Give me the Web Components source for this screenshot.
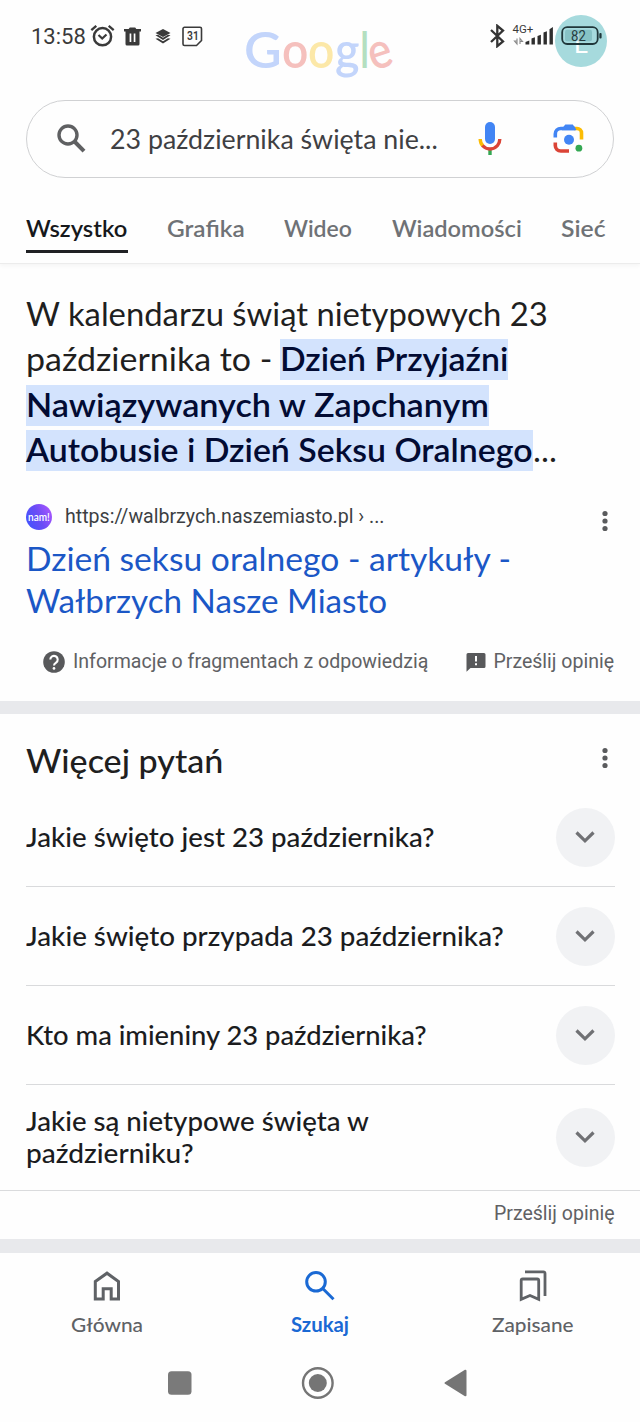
<!DOCTYPE html>
<html lang="pl">
<head>
<meta charset="utf-8">
<title>23 października święta nietypowe</title>
<style>
html,body{margin:0;background:#fefefe;overflow:hidden}
body{font-family:Lato,"Noto Sans",sans-serif;width:640px;height:1422px;color:#1f1f1f}
</style>
</head>
<body>
<search-app></search-app>

<script>
const make = (name, html, after) => customElements.define(name, class extends HTMLElement {
  connectedCallback() {
    if (this.shadowRoot) return;
    const t = document.createElement('template');
    t.innerHTML = html;
    this.attachShadow({mode: 'open'}).append(t.content.cloneNode(true));
    if (after) after.call(this, this.shadowRoot);
  }
});

make('search-app', `
<style>
:host{display:flex;flex-direction:column;height:1422px;position:relative}
.band{background:#e8e9ec;flex:none}
</style>
<status-bar></status-bar>
<page-header></page-header>
<featured-snippet></featured-snippet>
<div class="band" style="height:12.5px"></div>
<people-ask></people-ask>
<div class="band" style="height:14.7px"></div>
<bottom-nav></bottom-nav>
<system-nav></system-nav>`);

make('status-bar', `
<style>
:host{position:absolute;z-index:2;inset:0 0 auto 0;height:72px;display:flex;align-items:center;box-sizing:border-box;padding:0 39.500px 0 31px;font-family:Roboto,sans-serif;color:#3a3a3a}
svg{display:block;flex:none}
.net{position:relative;width:41px;height:24px;margin-left:8px}
.net fit-text{position:absolute;left:0;top:-1px;font-size:11.500px;line-height:13px}
.bat{width:40px;height:22px;margin-left:7px;display:grid;place-items:center;position:relative}
.bat svg{position:absolute;inset:0 auto auto 0}
.bat fit-text{font-size:14px;line-height:20px;margin-right:4px;color:#263c3f}
</style>
<fit-text w="55" style="font-size:22px;line-height:30px;margin-top:2px">13:58</fit-text>
<svg style="margin-left:4px" width="25" height="24" viewBox="0 0 25 24" fill="none" stroke="#3a3a3a" stroke-width="2.5"><circle cx="12.5" cy="12.7" r="8.6"/><path d="M8.5 11l3.7 3.5 4.3-4" stroke-width="2.2"/><path d="M1.3 6.2l5-4.3M18.7 1.900l5 4.300" stroke-width="2.300"/></svg>
<svg style="margin-left:9px" width="17" height="19" viewBox="0 0 17 19"><path fill="#3a3a3a" fill-rule="evenodd" d="M0 2h4.700L5.800.500h5.400L12.300 2H17v2.500h-1.500V17a1.500 1.500 0 0 1-1.500 1.500H3A1.500 1.500 0 0 1 1.500 17V4.500H0zM5.600 6.500v8.500h1.700V6.500zm4.100 0v8.500h1.700V6.500z"/></svg>
<svg style="margin-left:14px" width="16" height="15" viewBox="0 0 16 15" fill="#3a3a3a"><path d="M8 0l7.500 4L8 8 .5 4z"/><path d="M.5 6.300L3 5.700 8 8.700l5-3 2.500.6L8 10.900z"/><path d="M.5 9.800L3 9.200l5 3 5-3 2.500.6L8 14.400z"/></svg>
<span style="position:relative;margin-left:11px;width:21px;height:21px;display:grid;place-items:center">
<svg style="position:absolute" width="21" height="21" viewBox="0 0 21 21" fill="none" stroke="#3a3a3a" stroke-width="1.600"><path d="M2.500 1.300h15.500a1.500 1.500 0 0 1 1.500 1.500v11.700l-5 5H2.500A1.500 1.500 0 0 1 1 18V2.800a1.500 1.500 0 0 1 1.500-1.500zM19.500 14.500l-5 5"/></svg>
<fit-text w="12" style="font-size:12px;line-height:14px;font-weight:600;margin-bottom:1px">31</fit-text></span>
<span style="flex:1"></span>
<svg width="15" height="24" viewBox="0 0 15 24" fill="none" stroke="#333" stroke-width="2.300"><path d="M1 6l12 11.500-5.700 4.700V1.800L13 6.500 1 18"/></svg>
<span class="net">
<fit-text w="21">4G+</fit-text>
<svg width="41" height="24" viewBox="0 0 41 24"><path fill="#2e2e2e" d="M12.500 20.500V18l3.800-1.500v4zM18.500 20.500v-6l3.400-1.200v7.200zM24.500 20.500v-8.500l3.400-1.200v9.700zM30.500 20.500V8.500l3.400-1.300v13.300zM36.500 20.500V5.200L39.900 3v17.500z"/><path stroke="#888" fill="none" stroke-width="1.100" d="M4 14.500v5.500L1.500 17H4M7 20v-5.500l2.500 3H7"/></svg>
</span>
<span class="bat"><svg width="41" height="22" viewBox="0 0 41 22"><rect x="1.200" y="2.200" width="35.500" height="16.800" rx="5" fill="none" stroke="#20373a" stroke-width="1.800"/><rect x="4" y="4.800" width="27" height="11.500" rx="2" fill="#5b9da2" opacity=".4"/><rect x="38.300" y="8" width="2.300" height="5.500" rx="1" fill="#20373a"/></svg><fit-text w="15">82</fit-text></span>`);

make('page-header', `
<style>
:host{display:block;height:264px;flex:none;border-bottom:1px solid #ececec;box-sizing:border-box;box-shadow:0 2px 4px #0000000a}
.top{height:99.500px;position:relative;display:flex;justify-content:center}
.avatar{position:absolute;left:555px;top:15px;width:52px;height:52px;border-radius:50%;background:#a6dadd;color:#fff;display:grid;place-items:center;font:26px/52px Roboto,sans-serif}
.avatar span{margin-top:3px}
.logo{margin:9px 5px 0 0;font-size:50.500px;line-height:80px;font-weight:600;height:80px;display:flex;width:147.500px}
.b{color:#c3d5fb}.r{color:#f5c0bd}.y{color:#fce8a8}.g{color:#b4dfc0}
.e{transform:rotate(-18deg);transform-origin:50% 59%}
</style>
<div class="top"><div class="logo"><fit-text w="38" class="b">G</fit-text><fit-text w="26.500" class="r">o</fit-text><fit-text w="26.500" class="y">o</fit-text><fit-text w="25" class="b">g</fit-text><fit-text w="9" class="g">l</fit-text><fit-text w="23.500" class="r e">e</fit-text></div><div class="avatar"><span>L</span></div></div>
<search-box></search-box>
<result-tabs></result-tabs>`);

make('search-box', `
<style>
:host{display:flex;align-items:center;margin:0 26px;width:588px;height:78px;border:1.500px solid #d0d1d3;border-radius:39px;box-sizing:border-box;color:#3f4043}
svg{display:block;flex:none}
</style>
<svg style="margin-left:29px" width="32" height="32" viewBox="0 0 32 32" fill="none" stroke="#5f6062" stroke-width="3.400"><circle cx="12" cy="12" r="9"/><path d="M18.500 18.500l9.500 9.700" stroke-width="4"/></svg>
<fit-text w="328" style="margin-left:22px;font-size:27px;line-height:40px">23 października święta nie...</fit-text>
<svg style="margin-left:40px" width="24" height="34" viewBox="0 0 24 34" fill="none" stroke-width="3.400"><path d="M12 27v6" stroke="#34a853"/><path d="M2.200 17c0 3 1 5.200 2.800 7" stroke="#fbbc04"/><path d="M4.500 23.500c4 4.700 11 4.700 15 0 1.700-2 2.300-4 2.300-6.500" stroke="#db4437"/><rect x="7" y="0" width="10" height="22" rx="5" fill="#4285f4"/></svg>
<svg style="margin-left:51px" width="32" height="32" viewBox="0 0 32 32" fill="none" stroke-width="3.600"><path d="M21 5.500h3a4.500 4.500 0 0 1 4.500 4.500V16.500" stroke="#fbbc04"/><path d="M2.300 14.500v-3.500A5.500 5.500 0 0 1 7.800 5.500H22" stroke="#4285f4"/><path d="M9 5.500l3.300-4h7.500L23 6v1.200H9z" fill="#4285f4"/><path d="M2.300 19.500v3a5.500 5.500 0 0 0 5.500 5.500H16" stroke="#db4437"/><circle cx="16" cy="16.800" r="5" fill="#4285f4"/><circle cx="25.900" cy="25.200" r="3.400" fill="#34a853"/></svg>`);

make('result-tabs', `
<style>
:host{display:flex;padding:32px 0 0 26px;height:43px;font-size:22px;line-height:38px;font-weight:600;color:#6f7276}
fit-text{margin-right:39.500px;height:43px}
.on{color:#16181b;box-sizing:border-box;border-bottom:3px solid #202124}
</style>
<fit-text class="on" w="101.500">Wszystko</fit-text><fit-text w="77.500">Grafika</fit-text><fit-text w="68">Wideo</fit-text><fit-text w="130">Wiadomości</fit-text><fit-text w="45">Sieć</fit-text>`);

make('kebab-menu', `
<style>:host{display:block;width:6px;height:22px}svg{display:block}</style>
<svg width="6" height="22" viewBox="0 0 6 22" fill="#5a5b5d"><circle cx="3" cy="3.500" r="2.600"/><circle cx="3" cy="11" r="2.600"/><circle cx="3" cy="18.500" r="2.600"/></svg>`);

make('featured-snippet', `
<style>
:host{display:block;height:437px;flex:none;box-sizing:border-box;padding:26.500px 26px 0;font-size:32.300px}
.line{display:flex;line-height:45.600px;height:45.600px}
.hl{font-weight:600;color:#020b33;background:linear-gradient(#0000 2.800px,#d3e3fd 2.800px 43.600px,#0000 43.600px)}
.src{display:flex;align-items:center;height:28px;margin-top:30.500px;font:19.500px/28px Roboto,sans-serif;color:#3c3f43}
.fav{width:26px;height:26px;border-radius:50%;background:linear-gradient(65deg,#3a55ff,#6a4cf6 50%,#b657ff);color:#fff;display:grid;place-items:center;margin-right:13px;font:600 10.500px/12px Lato,sans-serif}
kebab-menu{margin:7px 6px 0 auto}
.title{color:#1b57c6;line-height:42px;margin-top:6.700px}
.meta{display:flex;align-items:center;height:28px;margin:26px 0 0 17px;font:19.500px/28px Roboto,sans-serif;color:#606164}
svg{display:block;flex:none}
</style>
<div class="line"><fit-text w="522">W kalendarzu świąt nietypowych 23</fit-text></div>
<div class="line"><fit-text w="246" style="margin-right:8px">października to -</fit-text><fit-text class="hl" w="228">Dzień Przyjaźni</fit-text></div>
<div class="line"><fit-text class="hl" w="463">Nawiązywanych w Zapchanym</fit-text></div>
<div class="line"><fit-text class="hl" w="507">Autobusie i Dzień Seksu Oralnego</fit-text><fit-text w="24">...</fit-text></div>
<div class="src"><span class="fav"><fit-text w="22">nam!</fit-text></span><fit-text w="320">https://walbrzych.naszemiasto.pl › ...</fit-text><kebab-menu></kebab-menu></div>
<div class="title"><fit-text w="485">Dzień seksu oralnego - artykuły -</fit-text><fit-text w="361">Wałbrzych Nasze Miasto</fit-text></div>
<div class="meta">
<svg width="22" height="22" viewBox="0 0 22 22"><circle cx="11" cy="11" r="10.800" fill="#58595b"/><path d="M7.300 8.600a3.700 3.700 0 1 1 5.800 3c-1.300.9-2.100 1.500-2.100 3" fill="none" stroke="#fff" stroke-width="2.100"/><circle cx="11" cy="17.400" r="1.350" fill="#fff"/></svg>
<fit-text w="355" style="margin-left:8px">Informacje o fragmentach z odpowiedzią</fit-text>
<svg style="margin-left:38px" width="20" height="20" viewBox="0 0 20 20"><path fill="#58595b" d="M2 1h16a1.500 1.500 0 0 1 1.500 1.500v12A1.500 1.500 0 0 1 18 16H4.500L.500 19.700V2.500A1.500 1.500 0 0 1 2 1z"/><path stroke="#fff" stroke-width="2" d="M10 4v5.500M10 11.300v2"/></svg>
<fit-text w="121" style="margin-left:7.500px">Prześlij opinię</fit-text></div>`);

make('people-ask', `
<style>
:host{display:block;height:525px;flex:none;box-sizing:border-box;padding-top:24px}
.h{display:flex;margin:0 26px;height:50px;font-size:32px;line-height:46px;font-weight:500}
kebab-menu{margin:9px 6px 0 auto}
.fb{height:47px;display:flex;justify-content:flex-end;padding-right:25px;font:19.500px/46px Roboto,sans-serif;color:#606164}
.end{border-top:1.200px solid #dadbdd}
</style>
<div class="h"><fit-text w="197">Więcej pytań</fit-text><kebab-menu></kebab-menu></div>
<ask-row><fit-text w="409">Jakie święto jest 23 października?</fit-text></ask-row>
<ask-row><fit-text w="478">Jakie święto przypada 23 października?</fit-text></ask-row>
<ask-row><fit-text w="401">Kto ma imieniny 23 października?</fit-text></ask-row>
<ask-row last><fit-text w="343">Jakie są nietypowe święta w</fit-text><fit-text w="168">październiku?</fit-text></ask-row>
<div class="end fb"><fit-text w="121">Prześlij opinię</fit-text></div>`);

make('ask-row', `
<style>
:host{display:flex;align-items:center;justify-content:space-between;margin:0 25.500px 0 26px;height:99px;box-sizing:border-box;border-bottom:1.300px solid #d9dadc;font-size:26.200px;line-height:32px;font-weight:500;color:#1b1c1e}
:host([last]){height:105px;border:0}
.q{margin-top:1px}
:host([last]) .q{margin:0 0 1px}
.c{width:59px;height:59px;border-radius:50%;background:#f1f2f4;display:grid;place-items:center;margin-top:1px}
:host([last]) .c{margin-top:0}
svg{display:block}
</style>
<div class="q"><slot></slot></div>
<div class="c"><svg width="20" height="14" viewBox="0 0 20 14" fill="none" stroke="#707174" stroke-width="3.200"><path d="M1.500 2.500l8.500 8.300 8.500-8.300"/></svg></div>`);

make('bottom-nav', `
<style>
:host{display:grid;grid-template-columns:repeat(3,1fr);height:92px;flex:none;font-size:20px;line-height:26px;font-weight:500;color:#5f6266}
div{display:flex;flex-direction:column;align-items:center;padding-top:16px}
svg{display:block;height:34px;margin-bottom:8px}
.on{color:#1a69d4;font-weight:700}
</style>
<div><svg width="32" height="34" viewBox="0 0 32 34" fill="none" stroke="#5f6266" stroke-width="3"><path d="M4.300 12.500L16 4.200l11.500 8.300V30H20.200V19.800h-8V30H4.300z"/></svg><fit-text w="72">Główna</fit-text></div>
<div class="on"><svg width="32" height="34" viewBox="0 0 32 34" fill="none" stroke="#1a69d4" stroke-width="3"><circle cx="12" cy="12.800" r="9.300"/><path d="M18.500 19.300L29.500 30.300"/></svg><fit-text w="58">Szukaj</fit-text></div>
<div><svg width="32" height="34" viewBox="0 0 32 34" fill="none" stroke="#5f6266" stroke-width="2.800"><path d="M4.200 30.300V11.500A1.500 1.500 0 0 1 5.700 10h14.500a1.500 1.500 0 0 1 1.500 1.500v18.800L13 26.500zM8 2.900h18.500A1.500 1.500 0 0 1 28 4.400V27"/></svg><fit-text w="82">Zapisane</fit-text></div>`);

make('system-nav', `
<style>
:host{display:flex;align-items:center;height:76px;box-sizing:border-box;padding-left:168px}
svg{display:block}
</style>
<svg width="24" height="24"><rect x="0" y=".3" width="23.500" height="23.400" rx="3.500" fill="#7a7a7a"/></svg>
<svg style="margin-left:109px" width="34" height="34" viewBox="0 0 34 34"><circle cx="16.800" cy="17" r="14.800" fill="none" stroke="#757575" stroke-width="2.400"/><circle cx="16.800" cy="17" r="9" fill="#757575"/></svg>
<svg style="margin-left:109px" width="24" height="28" viewBox="0 0 24 28"><path d="M1.500 14L21.500 1.700v24.600z" fill="#757575" stroke="#757575" stroke-width="2" stroke-linejoin="round"/></svg>`);

/* A single line of text whose glyphs are widened or narrowed to span the width given in "w". */
make('fit-text', `
<style>:host{display:block;flex:none;white-space:nowrap}span{display:inline-block;transform-origin:0 50%}</style>
<span><slot></slot></span>`, function (root) {
  const w = parseFloat(this.getAttribute('w'));
  const span = root.querySelector('span');
  this.style.width = w + 'px';
  span.style.transform = 'scaleX(' + w / span.offsetWidth + ')';
});
</script>
</body>
</html>
